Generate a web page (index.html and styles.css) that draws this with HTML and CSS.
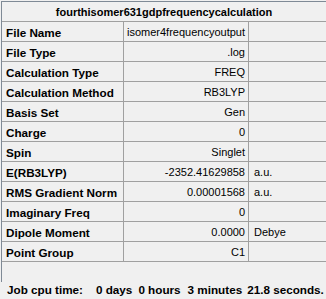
FILE: index.html
```html
<!DOCTYPE html>
<html>
<head>
<meta charset="utf-8">
<link rel="stylesheet" href="styles.css">
</head>
<body>
<div class="panel">
  <div class="title">fourthisomer631gdpfrequencycalculation</div>
  <div class="grid">
    <div class="lbl">File Name</div><div class="val">isomer4frequencyoutput</div><div class="unit"></div>
    <div class="lbl">File Type</div><div class="val">.log</div><div class="unit"></div>
    <div class="lbl">Calculation Type</div><div class="val">FREQ</div><div class="unit"></div>
    <div class="lbl">Calculation Method</div><div class="val">RB3LYP</div><div class="unit"></div>
    <div class="lbl">Basis Set</div><div class="val">Gen</div><div class="unit"></div>
    <div class="lbl">Charge</div><div class="val">0</div><div class="unit"></div>
    <div class="lbl">Spin</div><div class="val">Singlet</div><div class="unit"></div>
    <div class="lbl">E(RB3LYP)</div><div class="val">-2352.41629858</div><div class="unit">a.u.</div>
    <div class="lbl">RMS Gradient Norm</div><div class="val">0.00001568</div><div class="unit">a.u.</div>
    <div class="lbl">Imaginary Freq</div><div class="val">0</div><div class="unit"></div>
    <div class="lbl">Dipole Moment</div><div class="val">0.0000</div><div class="unit">Debye</div>
    <div class="lbl">Point Group</div><div class="val">C1</div><div class="unit"></div>
  </div>
  <div class="spacer"></div>
</div>
<div class="job"><span>Job cpu time:</span><span class="t1">0 days</span><span class="t2">0 hours</span><span class="t3">3 minutes</span><span class="t4">21.8 seconds.</span></div>
</body>
</html>
```
FILE: styles.css
```css
html, body {
  margin: 0;
  padding: 0;
  background: #f0f0f0;
  color: #000;
  font-family: "Liberation Sans", Arial, sans-serif;
  font-size: 11px;
  overflow: hidden;
}

.panel {
  margin: 1px 0 0 1px;
  border-top: 1px solid #7f8a96;
  border-left: 1px solid #7f8a96;
}

.title {
  height: 19px;
  line-height: 20px;
  text-align: center;
  font-weight: bold;
  font-size: 11px;
  border-bottom: 1px solid #a0a0a0;
}

.grid {
  display: grid;
  grid-template-columns: 122px 125px 1fr;
}

.grid > div {
  height: 19px;
  line-height: 21px;
  border-bottom: 1px solid #a0a0a0;
  white-space: nowrap;
  overflow: hidden;
}

.lbl {
  font-weight: bold;
  font-size: 11.7px;
  padding-left: 4px;
  border-right: 1px solid #a0a0a0;
}

.val {
  text-align: right;
  padding-right: 3px;
  border-right: 1px solid #a0a0a0;
}

.unit {
  padding-left: 5px;
}

.spacer {
  height: 20px;
}

.job {
  display: flex;
  font-weight: bold;
  font-size: 11.7px;
  padding-left: 7px;
  line-height: 16px;
  white-space: nowrap;
}

.job .t1 { margin-left: 13px; }
.job .t2 { margin-left: 6px; }
.job .t3 { margin-left: 7px; }
.job .t4 { margin-left: 5px; }
```
